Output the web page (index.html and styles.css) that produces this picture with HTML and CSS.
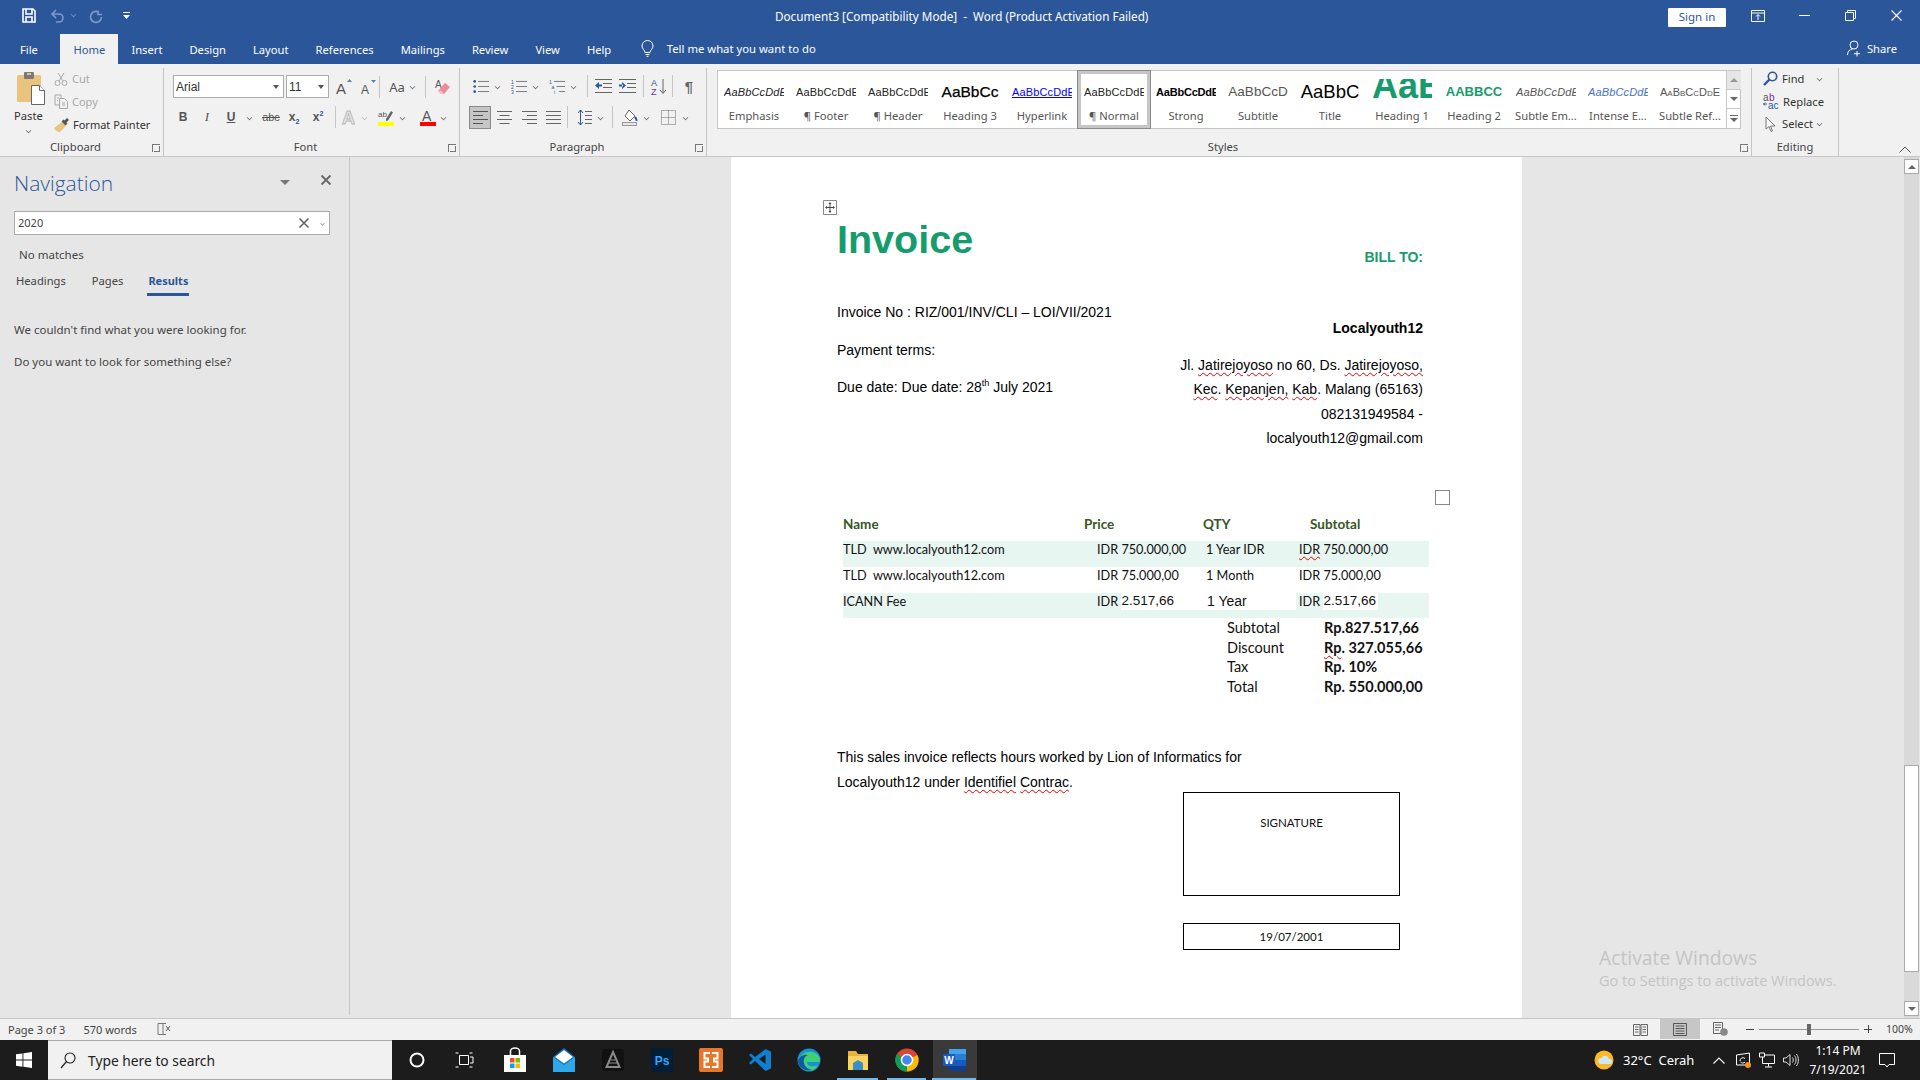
FILE: index.html
```html
<!doctype html>
<html>
<head>
<meta charset="utf-8">
<title>Document3 - Word</title>
<link rel="stylesheet" href="styles.css">
</head>
<body>

<div class="titlebar">
	<div class="qat">
		<svg width="14" height="15" viewBox="0 0 14 15"><path d="M1 1h10l2 2v11H1z M4 1v5h6V1 M4 14V9h6v5" fill="none" stroke="#fff" stroke-width="1.6"/></svg>
		<svg class="dim" width="16" height="14" viewBox="0 0 16 14"><path d="M6 1L2 5l4 4 M2 5h7a4 4 0 0 1 0 8H6" fill="none" stroke="#7f9cc8" stroke-width="1.6"/></svg>
		<i class="caret dimcaret"></i>
		<svg class="redo" width="14" height="14" viewBox="0 0 14 14"><path d="M9 1.5v4h4 M9.5 3A5.5 5.5 0 1 0 12.5 8" fill="none" stroke="#7f9cc8" stroke-width="1.6"/></svg>
		<svg class="more" width="7" height="8" viewBox="0 0 7 8"><path d="M0 0h7v1H0z M0 3h7L3.5 7z" fill="#fff"/></svg>
	</div>
	<div class="doc-title">Document3 [Compatibility Mode]&nbsp; -&nbsp; Word (Product Activation Failed)</div>
	<div class="win">
		<span class="signin">Sign in</span>
		<svg class="w-display" width="14" height="12" viewBox="0 0 14 12"><path d="M.5.5h13v11H.5z M.5 3h13 M7 10V5 M5 6.5L7 4.5l2 2" fill="none" stroke="#fff"/></svg>
		<svg class="w-min" width="11" height="1" viewBox="0 0 11 1"><path d="M0 0h11v1H0z" fill="#fff"/></svg>
		<svg class="w-max" width="11" height="11" viewBox="0 0 11 11"><path d="M.5 2.5h8v8h-8z M2.5 2.5v-2h8v8h-2" fill="none" stroke="#fff"/></svg>
		<svg class="w-close" width="11" height="11" viewBox="0 0 11 11"><path d="M.5.5l10 10 M10.5.5l-10 10" fill="none" stroke="#fff" stroke-width="1.1"/></svg>
	</div>
</div>

<div class="tabs">
	<span class="tab tab-file">File</span>
	<span class="tab on">Home</span>
	<span class="tab">Insert</span>
	<span class="tab">Design</span>
	<span class="tab">Layout</span>
	<span class="tab">References</span>
	<span class="tab">Mailings</span>
	<span class="tab">Review</span>
	<span class="tab">View</span>
	<span class="tab">Help</span>
	<svg class="bulb" width="13" height="17" viewBox="0 0 13 17"><path d="M4 12.5C4 10 1 9 1 6a5.5 5.5 0 0 1 11 0c0 3-3 4-3 6.5z M4.5 14.5h4 M5.5 16.300h2" fill="none" stroke="#fff"/></svg>
	<span class="tell">Tell me what you want to do</span>
	<span class="share">
		<svg width="14" height="17" viewBox="0 0 14 17"><circle cx="7" cy="5" r="4" fill="none" stroke="#fff"/><path d="M.5 15c0-3.500 2-5.500 5-6 M10 11v5.500 M7 13.700h6" fill="none" stroke="#fff"/></svg>
		Share
	</span>
</div>

<div class="ribbon">

	<div class="group g-clip">
		<div class="g-body clip-body">
			<div class="paste">
				<svg width="28" height="33" viewBox="0 0 28 33"><rect x="0" y="3" width="24" height="27" rx="1.500" fill="#eac37c"/><rect x="7" y="0" width="10" height="7" rx="1" fill="#7a7a7a"/><rect x="10" y="1" width="4" height="2" fill="#eac37c"/><path d="M14.500 13.500h8l5 5v14h-13z" fill="#fff" stroke="#666"/><path d="M22.500 13.500v5h5" fill="#fff" stroke="#666"/></svg>
				<span>Paste</span>
				<i class="caret"></i>
			</div>
			<div class="clip-list">
				<span class="off"><svg width="14" height="14" viewBox="0 0 14 14"><path d="M4 1l5 8 M10 1L5 9" stroke="#a9a9a9" fill="none"/><circle cx="3.500" cy="11" r="2.500" fill="none" stroke="#a9a9a9"/><circle cx="10.500" cy="11" r="2.500" fill="none" stroke="#a9a9a9"/></svg>Cut</span>
				<span class="off"><svg width="14" height="15" viewBox="0 0 14 15"><path d="M1 1h6v3 M1 1v10h4 M5.500 4.500h5l3 3v7h-8z M3 4h2 M3 6.500h1 M8 9h3 M8 11h3" fill="none" stroke="#a9a9a9"/></svg>Copy</span>
				<span><svg width="16" height="15" viewBox="0 0 16 15"><path d="M8 5L12 9 6 15C3 15 1 13 0 11z" fill="#eac37c"/><path d="M7.500 4.500l2-2 1 1L13 1l2 2-2.500 2.500 1 1-2 2z" fill="#555"/></svg>Format Painter</span>
			</div>
		</div>
		<div class="g-label">Clipboard<i class="launch"></i></div>
	</div>

	<div class="group g-font">
		<div class="g-body">
			<div class="row font-r1">
				<span class="combo c-name">Arial<i class="tri"></i></span>
				<span class="combo c-size">11<i class="tri"></i></span>
				<span class="b w-grow"><svg width="16" height="15" viewBox="0 0 16 15"><text x="0" y="14.500" class="ic-t" font-size="15">A</text><path d="M11 3l2.500-3L16 3z" fill="#4f81bd"/></svg></span>
				<span class="b w-shrink"><svg width="16" height="14" viewBox="0 0 16 14"><text x="0" y="13.500" class="ic-t" font-size="12">A</text><path d="M10 0h5l-2.500 3z" fill="#4f81bd"/></svg></span>
				<i class="sep"></i>
				<span class="b w-aa"><b class="aa">Aa</b><i class="caret"></i></span>
				<i class="sep sep2"></i>
				<span class="b w-erase"><svg width="16" height="16" viewBox="0 0 16 16"><text x="0" y="9" class="ic-t" font-size="10">A</text><path d="M3 12l7-8 5 4-6 7H6z" fill="#ef8a9a"/><path d="M3 12l3 3h3l-3.500-3.500z" fill="#f5c5cd"/></svg></span>
			</div>
			<div class="row font-r2">
				<span class="b w-f"><b class="fx">B</b></span>
				<span class="b w-f"><em class="fi">I</em></span>
				<span class="b w-f"><span class="fu">U</span></span>
				<i class="caret cg1"></i>
				<span class="b w-abc"><span class="fs">abc</span></span>
				<span class="b w-f2"><b class="fx">x<sub>2</sub></b></span>
				<span class="b w-f2"><b class="fx">x<sup>2</sup></b></span>
				<i class="sep sep3"></i>
				<span class="b w-eff"><svg width="15" height="16" viewBox="0 0 15 16"><text x="0" y="15" font-family="Liberation Sans" font-weight="bold" font-size="18" fill="#e6e6e6" stroke="#b5b5b5" stroke-width=".8">A</text></svg><i class="caret lt"></i></span>
				<span class="b w-hl"><svg width="16" height="17" viewBox="0 0 16 17"><text x="0" y="8" class="ic-t" font-size="8">ab</text><path d="M8 10l5-8 2 1.500-5 8-2 .5z" fill="#666"/><rect y="13" width="16" height="4" fill="#ff0"/></svg><i class="caret"></i></span>
				<span class="b w-fc"><svg width="16" height="17" viewBox="0 0 16 17"><text x="2" y="12" class="ic-t" font-size="14">A</text><rect y="13" width="16" height="4" fill="#f00"/></svg><i class="caret"></i></span>
			</div>
		</div>
		<div class="g-label">Font<i class="launch"></i></div>
	</div>

	<div class="group g-para">
		<div class="g-body">
			<div class="row para-r1">
				<span class="b w-list"><svg width="16" height="15" viewBox="0 0 19 17"><path d="M6 2.500h13 M6 8.500h13 M6 14.500h13" stroke="#666"/><circle cx="2" cy="2.500" r="1.600" fill="#2b579a"/><circle cx="2" cy="8.500" r="1.600" fill="#2b579a"/><circle cx="2" cy="14.500" r="1.600" fill="#2b579a"/></svg><i class="caret"></i></span>
				<span class="b w-list"><svg width="16" height="15" viewBox="0 0 19 17"><path d="M6 2.500h13 M6 8.500h13 M6 14.500h13" stroke="#666"/><text x="0" y="5" class="ic-b" font-size="6">1</text><text x="0" y="11" class="ic-b" font-size="6">2</text><text x="0" y="17" class="ic-b" font-size="6">3</text></svg><i class="caret"></i></span>
				<span class="b w-list"><svg width="16" height="15" viewBox="0 0 19 17"><path d="M6 2.500h13 M9 8.500h10 M12 14.500h7" stroke="#666"/><text x="0" y="5" class="ic-b" font-size="6">1</text><text x="3" y="11" class="ic-b" font-size="6">a</text><text x="6" y="17" class="ic-b" font-size="6">i</text></svg><i class="caret"></i></span>
				<i class="sep"></i>
				<span class="b w-ind"><svg width="17" height="16" viewBox="0 0 17 16"><path d="M0 1.500h17 M8 5.500h9 M8 9.500h9 M0 14.500h17" stroke="#666"/><path d="M0 7.500l4-3.500v7z M3 6.500h4v2H3z" fill="#2b579a"/></svg></span>
				<span class="b w-ind"><svg width="17" height="16" viewBox="0 0 17 16"><path d="M0 1.500h17 M8 5.500h9 M8 9.500h9 M0 14.500h17" stroke="#666"/><path d="M7 7.500L3 4v7z M0 6.500h4v2H0z" fill="#2b579a"/></svg></span>
				<i class="sep sep5"></i>
				<span class="b w-sort"><svg width="16" height="17" viewBox="0 0 16 17"><text x="0" y="7.500" class="ic-b" font-size="9">A</text><text x="0" y="16.500" font-family="Liberation Sans" font-size="9" fill="#7030a0">Z</text><path d="M12 1v14 M9 12l3 3.500 3-3.500" fill="none" stroke="#666"/></svg></span>
				<i class="sep sep6"></i>
				<span class="b w-pil">¶</span>
			</div>
			<div class="row para-r2">
				<span class="al al-on"><svg width="15" height="13" viewBox="0 0 15 13"><path d="M0 .500h15 M0 4.500h10 M0 8.500h15 M0 12.500h10" stroke="#555"/></svg></span>
				<span class="al"><svg width="15" height="13" viewBox="0 0 15 13"><path d="M0 .500h15 M2.500 4.500h10 M0 8.500h15 M2.500 12.500h10" stroke="#666"/></svg></span>
				<span class="al"><svg width="15" height="13" viewBox="0 0 15 13"><path d="M0 .500h15 M5 4.500h10 M0 8.500h15 M5 12.500h10" stroke="#666"/></svg></span>
				<span class="al"><svg width="15" height="13" viewBox="0 0 15 13"><path d="M0 .500h15 M0 4.500h15 M0 8.500h15 M0 12.500h15" stroke="#666"/></svg></span>
				<i class="sep"></i>
				<span class="b w-ls"><svg width="14" height="17" viewBox="0 0 14 17"><path d="M2.500 1v15 M0 4l2.500-3L5 4 M0 13l2.500 3L5 13" fill="none" stroke="#2b579a"/><path d="M7 2.500h7 M7 6.500h7 M7 10.500h7 M7 14.500h7" stroke="#666"/></svg><i class="caret"></i></span>
				<i class="sep sep8"></i>
				<span class="b w-sh"><svg width="16" height="17" viewBox="0 0 16 17"><path d="M7 1l6 6-5 5-5-5z" fill="#fff" stroke="#666"/><path d="M13 8c1 1.500 2 2.500 1.500 4" stroke="#2b579a" stroke-width="2" fill="none"/><rect x=".5" y="13.500" width="14" height="3" fill="#e6e6e6" stroke="#999"/></svg><i class="caret"></i></span>
				<span class="b w-bd"><svg width="15" height="15" viewBox="0 0 15 15"><path d="M.5.500h14v14H.5z M7.500.500v14 M.5 7.500h14" fill="none" stroke="#666" stroke-dasharray="1 1"/></svg><i class="caret"></i></span>
			</div>
		</div>
		<div class="g-label">Paragraph<i class="launch"></i></div>
	</div>

	<div class="group g-styles">
		<div class="gallery">
			<div class="st"><span class="pv p-em">AaBbCcDdE</span><span>Emphasis</span></div>
			<div class="st"><span class="pv">AaBbCcDdE</span><span>¶ Footer</span></div>
			<div class="st"><span class="pv">AaBbCcDdE</span><span>¶ Header</span></div>
			<div class="st"><span class="pv p-h3">AaBbCc</span><span>Heading 3</span></div>
			<div class="st"><span class="pv p-link">AaBbCcDdE</span><span>Hyperlink</span></div>
			<div class="st st-on"><span class="pv">AaBbCcDdE</span><span>¶ Normal</span></div>
			<div class="st"><span class="pv p-strong">AaBbCcDdE</span><span>Strong</span></div>
			<div class="st"><span class="pv p-sub">AaBbCcD</span><span>Subtitle</span></div>
			<div class="st"><span class="pv p-title">AaBbC</span><span>Title</span></div>
			<div class="st"><span class="pv p-h1"><b>AaB</b></span><span>Heading 1</span></div>
			<div class="st"><span class="pv p-h2">AABBCC</span><span>Heading 2</span></div>
			<div class="st"><span class="pv p-sem">AaBbCcDdE</span><span>Subtle Em...</span></div>
			<div class="st"><span class="pv p-iem">AaBbCcDdE</span><span>Intense E...</span></div>
			<div class="st"><span class="pv p-sref">AaBbCcDdE</span><span>Subtle Ref...</span></div>
			<div class="gal-scroll">
				<span class="gs gs-off"><i class="up"></i></span>
				<span class="gs"><i class="dn"></i></span>
				<span class="gs"><i class="dn dnbar"></i></span>
			</div>
		</div>
		<div class="g-label">Styles<i class="launch"></i></div>
	</div>

	<div class="group g-edit">
		<div class="edit-list">
			<span><svg width="15" height="15" viewBox="0 0 15 15"><circle cx="9.500" cy="5.500" r="4.200" fill="none" stroke="#2b579a" stroke-width="1.600"/><path d="M6.500 8.500L1 14" stroke="#2b579a" stroke-width="2.400"/></svg>Find<i class="caret ec1"></i></span>
			<span><svg width="16" height="17" viewBox="0 0 16 17"><text x="0" y="7.500" font-family="Liberation Sans" font-size="10" fill="#555">a</text><text x="6" y="7.500" font-family="Liberation Sans" font-size="10" fill="#7030a0">b</text><text x="5" y="16" class="ic-b" font-size="10">ac</text><path d="M4 11H0.500 M2 9.500L.5 11 2 12.500" stroke="#2b579a" fill="none"/></svg>Replace</span>
			<span><svg width="15" height="16" viewBox="0 0 15 16"><path d="M3 1l9 9H7.500l2 5-1.500.5-2-5L3 13z" fill="#fff" stroke="#777"/></svg>Select<i class="caret ec2"></i></span>
		</div>
		<div class="g-label">Editing</div>
	</div>

	<svg class="collapse" width="12" height="7" viewBox="0 0 12 7"><path d="M.5 6.500L6 1l5.500 5.500" fill="none" stroke="#555"/></svg>
</div>

<div class="main">
	<div class="nav">
		<div class="nav-head">
			<span class="nav-title">Navigation</span>
			<i class="nav-drop"></i>
			<svg class="nav-x" width="10" height="10" viewBox="0 0 10 10"><path d="M.5.500l9 9 M9.500.500l-9 9" stroke="#666" stroke-width="1.800"/></svg>
		</div>
		<div class="nav-search">
			<span class="ns-text">2020</span>
			<svg width="10" height="10" viewBox="0 0 10 10"><path d="M.5.500l9 9 M9.500.500l-9 9" stroke="#666" stroke-width="1.600"/></svg>
			<i class="caret ns-c"></i>
		</div>
		<div class="nav-none">No matches</div>
		<div class="nav-tabs">
			<span>Headings</span>
			<span class="nt-pages">Pages</span>
			<span class="nt-on">Results</span>
		</div>
		<p class="nav-msg">We couldn't find what you were looking for.</p>
		<p class="nav-msg">Do you want to look for something else?</p>
	</div>

	<div class="docarea">
		<div class="page">
			<svg class="move" width="14" height="15" viewBox="0 0 14 15"><path d="M.5.500h13v14H.5z" fill="#fff" stroke="#888"/><path d="M7 3v9 M3 7.500h8" stroke="#444"/><path d="M7 2l-1.500 2h3z M7 13l-1.500-2h3z M2 7.500l2-1.500v3z M12 7.500l-2-1.500v3z" fill="#444"/></svg>
			<i class="endsq"></i>

			<div class="head">
				<div class="head-l">
					<h1>Invoice</h1>
					<p class="l1">Invoice No : RIZ/001/INV/CLI – LOI/VII/2021</p>
					<p class="l2">Payment terms:</p>
					<p class="l3">Due date: Due date: 28<sup>th</sup> July 2021</p>
				</div>
				<div class="head-r">
					<p class="bill">BILL TO:</p>
					<p class="cust">Localyouth12</p>
					<div class="addr">
						<p>Jl. <u>Jatirejoyoso</u> no 60, Ds. <u>Jatirejoyoso,</u></p>
						<p><u>Kec</u>. <u>Kepanjen,</u> <u>Kab</u>. Malang (65163)</p>
						<p>082131949584 -</p>
						<p>localyouth12@gmail.com</p>
					</div>
				</div>
			</div>

			<div class="items">
				<div class="it it-h">
					<span>Name</span><span>Price</span><span>QTY</span><span class="sh">Subtotal</span>
				</div>
				<div class="it it-z">
					<span>TLD&nbsp; www.localyouth12.com</span><span class="pr">IDR 750.000,00</span><span class="qt">1 Year IDR</span><span class="su"><u>IDR</u> 750.000,00</span>
				</div>
				<div class="it">
					<span>TLD&nbsp; www.localyouth12.com</span><span class="pr">IDR 75.000,00</span><span class="qt">1 Month</span><span class="su">IDR 75.000,00</span>
				</div>
				<div class="it it-z it-last">
					<span>ICANN Fee</span><span class="pr fl">IDR&nbsp;<span class="wh">2.517,66</span></span><span class="qt wh wq">1 Year</span><span class="su fl">IDR&nbsp;<span class="wh wn">2.517,66</span></span>
				</div>
			</div>

			<div class="sums">
				<span>Subtotal</span><b>Rp.827.517,66</b>
				<span>Discount</span><b><u>Rp</u>. 327.055,66</b>
				<span>Tax</span><b>Rp. 10%</b>
				<span>Total</span><b>Rp. 550.000,00</b>
			</div>

			<div class="note">
				<p>This sales invoice reflects hours worked by Lion of Informatics for</p>
				<p>Localyouth12 under <u>Identifiel</u> <u>Contrac</u>.</p>
			</div>

			<div class="sign">SIGNATURE</div>
			<div class="sign-date">19/07/2001</div>
		</div>
	</div>

	<div class="vbar">
		<span class="vb"><i class="up"></i></span>
		<span class="thumb"></span>
		<span class="vb"><i class="dn"></i></span>
	</div>

	<div class="activate">
		<div class="a1">Activate Windows</div>
		<div class="a2">Go to Settings to activate Windows.</div>
	</div>
</div>

<div class="status">
	<span class="s1">Page 3 of 3</span>
	<span class="s2">570 words</span>
	<svg width="14" height="15" viewBox="0 0 14 15"><path d="M1 1.500h5v11H1z M6 1.500h3 M9 12.500H6" fill="none" stroke="#777"/><path d="M9 4l4 5 M13 4L9 9" stroke="#555"/></svg>
	<div class="s-right">
		<span class="vw"><svg width="15" height="13" viewBox="0 0 15 13"><path d="M.5 1.500h6.500v11H.5z M8 1.500h6.500v11H8z M2 4h3.500 M2 6.500h3.500 M2 9h3.500 M9.500 4H13 M9.500 6.500H13 M9.500 9H13" fill="none" stroke="#666"/></svg></span>
		<span class="vw vw-on"><svg width="14" height="13" viewBox="0 0 14 13"><path d="M.5.500h13v12H.5z M2.500 3h9 M2.500 5.500h9 M2.500 8h9 M2.500 10.500h9" fill="none" stroke="#555"/></svg></span>
		<span class="vw"><svg width="15" height="14" viewBox="0 0 15 14"><path d="M.5.500h9v11H.5z M2 3h6 M2 5.500h6 M2 8h4" fill="none" stroke="#666"/><circle cx="11" cy="10" r="3.800" fill="#888"/></svg></span>
		<span class="zoom">
			<i class="z-m"></i>
			<span class="z-track"><i class="z-thumb"></i></span>
			<i class="z-p"></i>
		</span>
		<span class="pct">100%</span>
	</div>
</div>

<div class="taskbar">
	<span class="start"><svg width="16" height="16" viewBox="0 0 16 16"><path d="M0 2.300l6.500-.9v6.200H0z M7.400 1.300L16 0v7.600H7.400z M0 8.500h6.500v6.200L0 13.700z M7.400 8.500H16V16l-8.600-1.300z" fill="#fff"/></svg></span>
	<div class="tsearch">
		<svg width="16" height="17" viewBox="0 0 16 17"><circle cx="10" cy="6" r="5" fill="none" stroke="#222" stroke-width="1.100"/><path d="M6.500 9.500L1 16" stroke="#222" stroke-width="1.200"/></svg>
		<span>Type here to search</span>
	</div>
	<div class="tasks">
		<span class="tk"><svg width="16" height="16" viewBox="0 0 16 16"><circle cx="8" cy="8" r="6.500" fill="none" stroke="#fff" stroke-width="2"/></svg></span>
		<span class="tk"><svg class="tk-view" width="18" height="16" viewBox="0 0 18 16"><path d="M4.500 3.500h9v9h-9z M.5 1h3 M14.500 1h3 M.5 15h3 M14.500 15h3 M15 5h3v6h-3" fill="none" stroke="#fff"/></svg></span>
		<span class="tk"><svg width="24" height="24" viewBox="0 0 24 24"><path d="M1 7h22v17H1z" fill="#fff"/><path d="M7.500 7V3a4.500 3 0 0 1 9 0v4" fill="none" stroke="#fff" stroke-width="1.500"/><path d="M7 10h4.500v4.500H7z" fill="#f25022"/><path d="M12.500 10H17v4.500h-4.500z" fill="#7fba00"/><path d="M7 15.500h4.500V20H7z" fill="#00a4ef"/><path d="M12.500 15.500H17V20h-4.500z" fill="#ffb900"/></svg></span>
		<span class="tk"><svg width="24" height="24" viewBox="0 0 24 24"><path d="M12 0L23 9v15H1V9z" fill="#0a6fc2"/><path d="M1 9l11 8 11-8v15H1z" fill="#2fa8e8"/><path d="M3 9l9-7 9 7-9 6.500z" fill="#fff"/></svg></span>
		<span class="tk"><svg width="24" height="24" viewBox="0 0 24 24"><rect x="1" y="1" width="22" height="22" rx="3" fill="#111"/><path d="M12 4l6.500 15h-13z" fill="none" stroke="#8a8a8a" stroke-width="2"/><path d="M8 15h8 M9.500 12h5" stroke="#8a8a8a"/></svg></span>
		<span class="tk"><svg width="24" height="24" viewBox="0 0 24 24"><rect width="22" height="24" x="1" rx="2" fill="#001e36"/><text x="12" y="17" text-anchor="middle" font-family="Liberation Sans" font-weight="bold" font-size="12" fill="#31a8ff">Ps</text></svg></span>
		<span class="tk"><svg width="24" height="24" viewBox="0 0 24 24"><rect width="24" height="24" rx="2" fill="#e8762a"/><path d="M11 5H5.500v5.500H9v3H5.500V19H11 M13 5h5.500v5.500H15v3h3.500V19H13" fill="none" stroke="#fff" stroke-width="2"/></svg></span>
		<span class="tk"><svg width="24" height="24" viewBox="0 0 24 24"><path d="M17.500 1L23 3.500v17L17.500 23 7 13l-4 3.500L1 15l4-4-4-4 2-1.500L7 9z" fill="#0e7fd1"/><path d="M17.500 6.500L11 11l6.500 5z" fill="#1c1c1c"/></svg></span>
		<span class="tk"><svg width="24" height="24" viewBox="0 0 24 24"><circle cx="12" cy="12" r="11.500" fill="#1a8fd6"/><path d="M1 13C3 5 12 2 18 5c4 2 5.500 6 5 9H10c0 4 5 6 11 3-3 6-9 7-13 5C4 20 1 17 1 13z" fill="#3fd07a"/><path d="M1 13c1-5 6-7 10-6-3 1-5 4-4 8 1 4 4 6 8 7-7 2-14-3-14-9z" fill="#0c59a4"/></svg></span>
		<span class="tk"><svg width="24" height="24" viewBox="0 0 24 24"><path d="M2 3h8l2 3h10v16H2z" fill="#e8b33a"/><path d="M2 8h20v14H2z" fill="#fbd35f"/><path d="M7 22v-7l5-3 5 3v7z" fill="#3a8fc9"/></svg></span>
		<span class="tk"><svg width="24" height="24" viewBox="0 0 24 24"><circle cx="12" cy="12" r="11.500" fill="#db4437"/><path d="M12 12L22.500 7A11.500 11.500 0 0 1 12 23.500z" fill="#fbbc05"/><path d="M12 12v11.500A11.500 11.500 0 0 1 2 6z" fill="#0f9d58"/><circle cx="12" cy="12" r="5.500" fill="#4285f4" stroke="#fff" stroke-width="1.500"/></svg></span>
		<span class="tk tk-on"><svg width="24" height="24" viewBox="0 0 24 24"><path d="M6 1h17v22H6z" fill="#2b7cd3"/><path d="M6 1h17v5H6z" fill="#41a5ee"/><path d="M6 12h17v6H6z" fill="#185abd"/><path d="M6 18h17v5H6z" fill="#103f91"/><rect y="6" width="12" height="12" rx="1" fill="#185abd"/><text x="6" y="16" text-anchor="middle" font-family="Liberation Sans" font-weight="bold" font-size="10" fill="#fff">W</text></svg></span>
	</div>
	<div class="run run1"></div><div class="run run2"></div><div class="run run3"></div>
	<div class="tray">
		<svg class="t-sun" width="20" height="20" viewBox="0 0 20 20"><circle cx="10" cy="10" r="9.500" fill="#fbb829"/><path d="M7 14a3 3 0 0 1 .5-6 4 4 0 0 1 7.500 1 2.500 2.500 0 0 1 1 5z" fill="#cfe6f7"/></svg>
		<span class="t-weather">32°C&nbsp; Cerah</span>
		<svg class="t-up" width="12" height="7" viewBox="0 0 12 7"><path d="M.5 6.500L6 1l5.500 5.500" fill="none" stroke="#fff" stroke-width="1.100"/></svg>
		<svg class="t-i" width="16" height="16" viewBox="0 0 16 16"><path d="M1.500 3l13-2v12h-13z M5 9a3 3 0 0 1 5-2.500 M10 10a3 3 0 0 1-4.500 0" fill="none" stroke="#fff"/><circle cx="13" cy="13" r="3" fill="#f7941d"/></svg>
		<svg class="t-i" width="16" height="16" viewBox="0 0 16 16"><path d="M3.500 3h12v8.500h-12z M9.500 11.500v3 M6 15h7" fill="none" stroke="#fff"/><path d="M.5 1h5v4h-5z" fill="#1c1c1c" stroke="#fff"/></svg>
		<svg class="t-i" width="16" height="16" viewBox="0 0 16 16"><path d="M.5 6h2.500L7 2.500v11L3 10H.5z M9.500 5.500c1 1.500 1 3.500 0 5 M11.500 3.500c2 2.500 2 6.500 0 9 M13.500 2c2.500 3.500 2.500 8.500 0 12" fill="none" stroke="#ddd"/></svg>
		<div class="clock"><span>1:14 PM</span><span>7/19/2021</span></div>
		<svg class="t-note" width="16" height="15" viewBox="0 0 16 15"><path d="M.5.500h15v11H10l-2 2.500-2-2.500H.5z" fill="none" stroke="#fff"/></svg>
	</div>
</div>

</body>
</html>
```

FILE: styles.css
```css
*{ margin: 0; padding: 0; box-sizing: border-box;}
html, body{ width: 1920px; height: 1080px; overflow: hidden;}
body{ display: flex; flex-direction: column; font-family: "Noto Sans", "Open Sans", sans-serif; font-size: 11.200px; color: #444; background: #e6e6e6;}
i{ display: block; font-style: normal;}
svg{ display: block; flex: none; overflow: visible;}
.ic-t{ font-family: "Liberation Sans", sans-serif; fill: #555;}
.ic-b{ font-family: "Liberation Sans", sans-serif; fill: #2b579a;}
.caret{ width: 5px; height: 5px; border-right: 1px solid #666; border-bottom: 1px solid #666; transform: rotate(45deg) scale(.8); flex: none;}

/* title bar */
.titlebar{ height: 34px; background: #2b579a; display: flex; align-items: center; color: #fff; position: relative; flex: none;}
.qat{ display: flex; align-items: center; padding-left: 22px; width: 300px; height: 100%; margin-top: -3px;}
.dim{ margin-left: 14px;}
.dimcaret{ border-color: #7f9cc8; margin-left: 5px; margin-top: -3px;}
.redo{ margin-left: 13px;}
.more{ margin-left: 20px;}
.doc-title{ position: absolute; left: 775px; top: 8px; font-size: 11.700px; white-space: nowrap;}
.win{ margin-left: auto; display: flex; align-items: center; height: 100%; margin-top: -3px;}
.signin{ width: 58px; height: 19px; margin-top: 3px; background: #fff; color: #2b579a; text-align: center; line-height: 18px; border-radius: 1px; font-size: 11.500px;}
.w-display{ margin-left: 25px;}
.w-min{ margin-left: 34px;}
.w-max{ margin-left: 35px;}
.w-close{ margin-left: 35px; margin-right: 18px;}

/* tabs */
.tabs{ height: 30px; background: #2b579a; display: flex; align-items: stretch; color: #fff; flex: none;}
.tab{ padding: 0 13.500px; line-height: 31px; white-space: nowrap;}
.tab-file{ padding: 0 22px 0 20px;}
.tab.on{ background: #f1f1f1; color: #2b579a; width: 58px; padding: 0 0 0 1px; text-align: center;}
.bulb{ margin: 6px 13px 0 16px;}
.tell{ line-height: 30px; white-space: nowrap; font-size: 11.300px;}
.share{ margin-left: auto; margin-right: 23px; display: flex; align-items: center; gap: 6px; margin-top: -1px;}

/* ribbon */
.ribbon{ height: 93px; background: #f1f1f1; border-bottom: 1px solid #c6c6c6; display: flex; position: relative; flex: none;}
.group{ position: relative; height: 88px; margin-top: 4px; border-right: 1px solid #c6c6c6; display: flex; flex-direction: column; flex: none;}
.g-clip{ width: 164px;}
.g-font{ width: 296px;}
.g-para{ width: 247px;}
.g-styles{ width: 1045px;}
.g-edit{ width: 87px;}
.g-body{ flex: 1; min-height: 0;}
.g-label{ height: 18px; line-height: 18px; text-align: center; position: relative; padding-right: 12px; flex: none;}
.g-edit .g-label{ padding-right: 0;}
.launch{ position: absolute; right: 3px; top: 6px; width: 8px; height: 8px; border: 1px solid #777; border-width: 1px 0 0 1px;}
.launch:after{ content: ""; display: block; width: 5px; height: 5px; margin: 1px 0 0 1px; border: 1px solid #777; border-width: 0 1px 1px 0;}

.clip-body{ display: flex;}
.paste{ width: 54px; padding: 4px 0 0 17px;}
.paste span{ display: block; margin: 3px 0 0 -3px; color: #333;}
.paste .caret{ margin: 5px 0 0 9px;}
.clip-list{ display: flex; flex-direction: column; margin-top: -1px; color: #333; font-size: 11px;}
.clip-list span{ display: flex; align-items: center; height: 23px; gap: 3px; white-space: nowrap;}
.clip-list .off{ color: #a9a9a9; gap: 4px;}

.row{ display: flex; align-items: center; position: relative;}
.b{ display: flex; align-items: center; justify-content: center; gap: 5px; flex: none; height: 24px; color: #555;}
.font-r1{ padding: 7px 0 0 9px; height: 30px;}
.font-r2{ padding: 0 0 0 7px; height: 38px;}
.combo{ height: 23px; background: #fff; border: 1px solid #ababab; color: #333; display: flex; align-items: center; padding-left: 2px; font-family: "Liberation Sans", sans-serif; font-size: 12px; position: relative; flex: none;}
.c-name{ width: 111px; margin-right: 2px;}
.c-size{ width: 43px;}
.tri{ position: absolute; right: 4px; top: 9px; border: 3px solid transparent; border-top: 4px solid #555;}
.w-grow{ width: 21px; margin-left: 4px;}
.w-shrink{ width: 21px; margin-left: 4px;}
.sep{ width: 1px; height: 22px; background: #c6c6c6; flex: none;}
.w-aa{ width: 28px; margin-left: 8px;}
.aa{ font-weight: normal; font-size: 13px; color: #555;}
.sep2{ margin-left: 9px;}
.w-erase{ width: 16px; margin-left: 9px;}
.w-f{ width: 24px;}
.w-f2{ width: 24px;}
.fx{ font-family: "Liberation Sans", sans-serif; font-size: 12px; color: #555;}
.fx sub, .fx sup{ font-size: 7px; color: #2b579a; line-height: 0;}
.fi{ font-family: "Liberation Serif", serif; font-size: 13px; color: #555;}
.fu{ font-family: "Liberation Sans", sans-serif; font-weight: bold; font-size: 12px; text-decoration: underline; color: #555;}
.cg1{ margin-left: 4px; margin-right: 8px;}
.w-abc{ width: 22px;}
.fs{ font-family: "Liberation Sans", sans-serif; font-size: 11px; text-decoration: line-through; color: #555;}
.sep3{ margin-left: 5px;}
.w-eff{ width: 31px; margin-left: 3px; gap: 5px;}
.lt{ border-color: #bbb;}
.w-hl{ width: 26px; margin-left: 8px; gap: 6px;}
.w-fc{ width: 26px; margin-left: 16px; gap: 5px;}

.para-r1{ padding: 5px 0 0 13px; height: 31px;}
.para-r2{ padding: 0 0 0 9px; height: 36px;}
.w-list{ width: 27px; margin-right: 11px; justify-content: flex-start; gap: 6px;}
.w-ind{ width: 17px; margin-left: 7px;}
.sep5{ margin-left: 7px;}
.w-sort{ width: 16px; margin-left: 7px;}
.sep6{ margin-left: 5px;}
.w-pil{ width: 14px; margin-left: 9px; font-family: "Liberation Sans", sans-serif; font-weight: bold; font-size: 15px; color: #666;}
.al{ width: 22px; height: 23px; margin-right: 2.500px; display: flex; align-items: center; justify-content: center; flex: none;}
.al-on{ background: #c6c6c6; border: 1px solid #8a8a8a;}
.w-ls{ width: 26px; margin-left: 9px; gap: 6px;}
.sep8{ margin-left: 9px;}
.w-sh{ width: 30px; margin-left: 7px; gap: 6px;}
.w-bd{ width: 29px; margin-left: 10px; gap: 7px;}

/* style gallery */
.group.g-styles{ padding-left: 10px; justify-content: space-between;}
.gallery{ width: 1024px; height: 59px; margin-top: 2px; background: #fff; border: 1px solid #c6c6c6; display: flex; flex: none;}
.st{ width: 72px; height: 57px; display: flex; flex-direction: column; align-items: center; text-align: center; color: #555; white-space: nowrap; flex: none; overflow: hidden; padding-top: 3px;}
.st-on{ outline: 3px solid #c6c6c6; outline-offset: -3px; box-shadow: 0 0 0 1px #8a8a8a;  overflow: visible; position: relative;}
.pv{ display: block; width: 60px; height: 33px; overflow: hidden; line-height: 36px; margin-bottom: 1px; font-family: "Liberation Sans", sans-serif; font-size: 11px; color: #222; letter-spacing: .15px;}
.p-em{ font-style: italic;}
.p-h3{ font-size: 15.500px; color: #000; -webkit-text-stroke: .25px #000; letter-spacing: 0;}
.p-link{ color: #00f; text-decoration: underline;}
.p-strong{ font-weight: bold; letter-spacing: -.2px; color: #000;}
.p-sub{ font-size: 13.500px; color: #555; letter-spacing: 0;}
.p-title{ font-size: 18.500px; color: #000; letter-spacing: 0;}
.p-h1{ color: #169c6c; font-size: 36px; height: 20px; margin: 5px 0 9px; line-height: 20px; letter-spacing: 0;}
.p-h1 b{ display: block; margin-top: -3px;}
.p-h2{ color: #169c6c; font-weight: bold; font-size: 13px; letter-spacing: 0;}
.p-sem{ font-style: italic; color: #555;}
.p-iem{ font-style: italic; color: #4472c4;}
.p-sref{ font-variant: small-caps; color: #555; letter-spacing: 0;}
.gal-scroll{ width: 15px; border-left: 1px solid #c6c6c6; display: flex; flex-direction: column; flex: none;}
.gs{ height: 19px; display: flex; align-items: center; justify-content: center; border-bottom: 1px solid #c6c6c6;}
.gs:last-child{ border-bottom: 0;}
.gs-off{ background: #e6e6e6;}
.up{ border: 4px solid transparent; border-bottom: 4px solid #999; border-top: 0;}
.dn{ border: 4px solid transparent; border-top: 4px solid #666; border-bottom: 0;}
.dnbar{ position: relative; margin-top: 3px;}
.dnbar:before{ content: ""; position: absolute; left: -4px; top: -7px; width: 8px; height: 1px; background: #666;}
.g-styles .g-label{ padding-right: 22px;}

/* editing */
.edit-list{ flex: 1; min-height: 0; margin-top: -1px; padding: 0 0 0 11px; color: #333; display: flex; flex-direction: column;}
.edit-list span{ display: flex; align-items: center; gap: 4px; height: 22.800px;}
.ec1{ margin-left: 8px;}
.ec2{ margin-left: 0;}
.collapse{ position: absolute; left: 1899px; top: 82px;}

/* main part */
.main{ flex: 1; min-height: 0; display: flex; position: relative;}
.nav{ width: 350px; border-right: 1px solid #c6c6c6; margin-bottom: 3px; padding: 0 0 0 14px; color: #444; flex: none; font-size: 11.500px;}
.nav-head{ height: 54px; display: flex; align-items: center; position: relative;}
.nav-title{ font-family: "Open Sans", sans-serif; font-weight: 300; font-size: 21px; color: #2b579a; margin-top: -3px;}
.nav-drop{ position: absolute; left: 266px; top: 23px; border: 5px solid transparent; border-top: 5px solid #777; border-bottom: 0;}
.nav-x{ position: absolute; left: 307px; top: 18px;}
.nav-search{ width: 316px; height: 24px; background: #fff; border: 1px solid #ababab; display: flex; align-items: center; padding: 0 0 0 3px;}
.ns-text{ flex: 1; color: #444; font-size: 11px; margin-top: -2px;}
.ns-c{ margin: 0 4px 0 11px; transform: rotate(45deg) scale(.6);}
.nav-none{ padding-left: 5px; margin-top: 11px; line-height: 17px;}
.nav-tabs{ display: flex; margin-top: 9px; height: 24px; padding-left: 2px; font-size: 11.200px;}
.nav-tabs span{ margin-right: 26px; line-height: 17px; position: relative;}
.nav-tabs .nt-pages{ margin-right: 24px;}
.nt-on{ color: #2b579a; font-weight: bold; border-bottom: 3px solid #2b579a; padding: 0 1px; font-size: 11px;}
.nav-msg{ margin-top: 15px; line-height: 17px;}
.nav-tabs + .nav-msg{ margin-top: 25px;}

.docarea{ flex: 1; padding-left: 381px; min-width: 0;}
.page{ width: 791px; height: 100%; background: #fff; padding: 0 99px 0 106px; position: relative; color: #000; font-family: "Liberation Sans", sans-serif; font-size: 14px;}
.move{ position: absolute; left: 92px; top: 43px;}
.endsq{ position: absolute; left: 704px; top: 333px; width: 15px; height: 15px; border: 1px solid #888;}

.head{ display: flex; justify-content: space-between; height: 357px;}
.head-l{ padding-top: 60px;}
h1{ font-size: 39.500px; line-height: 44px; color: #169c6c; font-weight: bold;}
.head-l p{ line-height: 20px; white-space: nowrap;}
.l1{ margin-top: 41px;}
.l2{ margin-top: 18px;}
.l3{ margin-top: 17px;}
.l3 sup{ font-size: 9px; line-height: 0;}
.head-r{ text-align: right; padding-top: 90px;}
.bill{ font-weight: bold; color: #169c6c; line-height: 20px;}
.cust{ font-weight: bold; line-height: 20px; margin-top: 51px;}
.addr{ margin-top: 15px;}
.addr p{ line-height: 24.300px; white-space: nowrap;}
u{ text-decoration: underline wavy #e00000 1px; text-underline-offset: 2px;}

.items{ width: 586px; margin-left: 6px; font-family: Lato, sans-serif; font-size: 12.700px; color: #111; white-space: nowrap;}
.it{ display: grid; grid-template-columns: 241px 119px 93px 1fr; height: 26px; line-height: 16px; align-items: start;}
.it-h{ height: 27px; color: #375623; font-weight: bold; line-height: 20px; font-size: 13.500px;}
.it-z{ background: #e8f6f1;}
.it-last{ height: 25px;}
.sh{ padding-left: 14px;}
.pr{ padding-left: 13px;}
.qt{ padding-left: 3px;}
.su{ padding-left: 3px;}
.fl{ display: flex;}
.wh{ background: #fff; flex: 1; height: 17px; font-family: "Liberation Sans", sans-serif; font-size: 13.500px;}
.wq{ padding-left: 4px; font-size: 14px;}
.wn{ flex: none; width: 55px;}

.sums{ display: grid; grid-template-columns: 97px auto; margin-left: 390px; font-family: Lato, sans-serif; font-size: 14.500px; line-height: 19.500px; color: #111; white-space: nowrap;}
.note{ margin-top: 49px; line-height: 25px; white-space: nowrap;}
.sign{ width: 217px; height: 104px; margin: -3px 0 0 346px; border: 1.500px solid #000; text-align: center; font-family: Lato, sans-serif; font-size: 11.500px; padding-top: 22px; line-height: 16px; color: #111;}
.sign-date{ width: 217px; height: 27px; margin: 27px 0 0 346px; border: 1.500px solid #000; text-align: center; font-family: Lato, sans-serif; font-size: 11.500px; line-height: 26px; color: #111;}

.vbar{ width: 17px; display: flex; flex-direction: column; align-items: center; padding: 2px 0; position: relative; background: linear-gradient(#d9d9d9, #d9d9d9) no-repeat 1px 0 / 15px 100%; flex: none;}
.vb{ width: 15px; height: 15px; background: #fff; border: 1px solid #ababab; display: flex; align-items: center; justify-content: center; flex: none;}
.vb .up{ border-bottom-color: #666;}
.thumb{ width: 15px; height: 207px; margin-top: auto; margin-bottom: 29px; background: #fff; border: 1px solid #ababab;}

.activate{ position: absolute; left: 1599px; top: 788px; font-family: "Open Sans", sans-serif; color: #c4c4c4; white-space: nowrap;}
.a1{ font-size: 19.300px; line-height: 26px;}
.a2{ font-size: 14.500px; line-height: 20px;}

/* status bar */
.status{ height: 22px; background: #f1f1f1; border-top: 1px solid #c6c6c6; display: flex; align-items: center; padding: 0 0 1px 8px; font-size: 11px; color: #444; flex: none;}
.s2{ margin-left: 18px;}
.status > svg{ margin-left: 20px;}
.s-right{ margin-left: auto; display: flex; align-items: center; height: 100%;}
.vw{ width: 40px; height: 100%; display: flex; align-items: center; justify-content: center;}
.vw-on{ background: #c6c6c6;}
.zoom{ display: flex; align-items: center; margin-left: 6px;}
.z-m{ width: 8px; height: 1px; background: #444; margin-right: 5px;}
.z-track{ width: 100px; height: 1px; background: #999; position: relative; display: block;}
.z-thumb{ position: absolute; left: 48px; top: -5px; width: 4px; height: 11px; background: #666;}
.z-p{ width: 8px; height: 8px; margin-left: 5px; background: linear-gradient(#444, #444) center / 8px 1px no-repeat, linear-gradient(#444, #444) center / 1px 8px no-repeat;}
.pct{ margin: 0 9px 0 14px; width: 25px; white-space: nowrap; font-size: 10.500px;}

/* taskbar */
.taskbar{ height: 40px; background: #1c1c1c; display: flex; align-items: center; color: #fff; position: relative; flex: none;}
.start{ width: 48px; display: flex; justify-content: center;}
.tsearch{ width: 344px; height: 40px; background: #f1f1f1; border-top: 1px solid #aaa; border-bottom: 1px solid #aaa; display: flex; align-items: center; gap: 12px; padding-left: 12px; color: #222; font-size: 13.800px;}
.tasks{ display: flex; align-items: center; height: 100%;}
.tk{ width: 49px; height: 100%; display: flex; align-items: center; justify-content: center;}
.tk-view{ margin-left: -3px;}
.tk-on{ background: #3a3a3a; width: 44px; margin-left: 2px;}
.run{ position: absolute; bottom: 0; height: 2px; background: #76b9ed;}
.run1{ left: 837px; width: 41px;}
.run2{ left: 887px; width: 39px;}
.run3{ left: 932px; width: 44px;}
.tray{ margin-left: auto; display: flex; align-items: center; font-size: 12.500px;}
.t-weather{ margin-left: 9px; white-space: nowrap; width: 90px; font-size: 13px;}
.t-i{ margin-left: 8px;}
.t-up{ margin-right: 2px;}
.clock{ width: 78px; display: flex; flex-direction: column; align-items: center; font-size: 12px; line-height: 19px;}
.t-note{ margin: 0 25px 0 2px;}
```
